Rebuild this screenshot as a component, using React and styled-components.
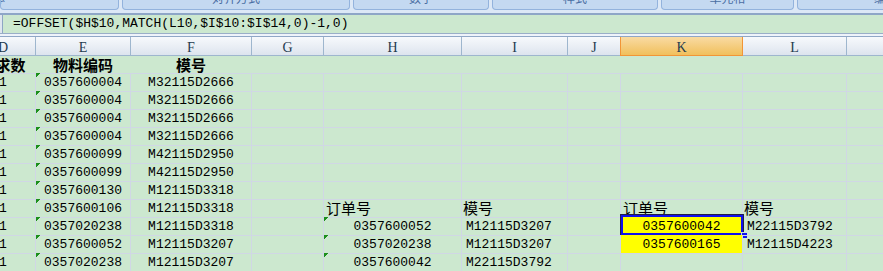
import styled, { createGlobalStyle } from "styled-components";

const GlobalStyle = createGlobalStyle`
  html, body {
    margin: 0;
    padding: 0;
    overflow: hidden;
    background: #cce8cf;
  }
`;

const COLS = "65px 95px 121px 72px 138px 106px 53px 122px 104px 100px";
const GRID = "#d0d7e5";
const MONO = `"Liberation Mono", "Noto Sans CJK SC", monospace`;
const CJK = `"Noto Sans CJK SC", "Noto Sans", sans-serif`;

const Window = styled.div`
  width: 883px;
  height: 271px;
  overflow: hidden;
  background: #cce8cf;
`;

const Ribbon = styled.div`
  display: flex;
  gap: 3px;
  height: 13px;
  background: #dce8f6;
  border-bottom: 2px solid #8ea6c7;
`;

const Group = styled.div`
  flex: 0 0 ${(p) => p.$w}px;
  height: 10px;
  box-sizing: border-box;
  overflow: hidden;
  background: #c4d9f1;
  border: 1px solid #93b3dd;
  border-top: none;
  border-radius: 0 0 4px 4px;
  font: 12px/12px ${CJK};
  color: #4a6ea3;
  text-align: ${(p) => (p.$left ? "left" : "center")};
`;

const GroupLabel = styled.div`
  margin-top: -8px;
  margin-left: ${(p) => p.$shift || 0}px;
  white-space: nowrap;
`;

const FormulaBar = styled.div`
  display: flex;
  height: 18px;
  background: #cce8cf;
  border-bottom: 1px solid #9aaec8;
`;

const FormulaStub = styled.div`
  width: 2px;
  background: #dfe6ef;
  border-right: 1px solid #8ea6c4;
`;

const FormulaText = styled.div`
  padding-left: 10px;
  font: 13px/18px ${MONO};
  color: #000;
  white-space: nowrap;
`;

const HeaderGap = styled.div`
  height: 2px;
  background: #eef3fa;
`;

const Sheet = styled.div`
  margin-left: -29px;
  width: 1000px;
`;

const HeaderRow = styled.div`
  display: grid;
  grid-template-columns: ${COLS};
  border-top: 1px solid #8fa7c6;
`;

const ColHead = styled.div`
  box-sizing: border-box;
  height: 19px;
  padding-top: 2px;
  text-align: center;
  font: 14px/17px "Liberation Serif", serif;
  color: #1f3b4f;
  background: ${(p) =>
    p.$active
      ? "linear-gradient(#f9dba3, #f1c05c)"
      : "linear-gradient(#f7f9fc, #dde4ee)"};
  border-right: 1px solid ${(p) => (p.$active ? "#f29536" : "#9eb6ce")};
  border-bottom: 1px solid ${(p) => (p.$active ? "#f29536" : "#9eb6ce")};
  box-shadow: ${(p) => (p.$active ? "-1px 0 0 #f29536" : "none")};
`;

const Row = styled.div`
  display: grid;
  grid-template-columns: ${COLS};
  height: ${(p) => p.$h}px;
`;

const Cell = styled.div`
  position: relative;
  box-sizing: border-box;
  border-bottom: 1px solid ${GRID};
  border-right: 1px solid ${(p) => (p.$noGrid ? "transparent" : GRID)};
  background: ${(p) =>
    p.$tri
      ? "linear-gradient(135deg, #1b8f1b 3.5px, transparent 3.5px)"
      : p.$fill || "transparent"};
  background-color: ${(p) => p.$fill || "transparent"};
  text-align: ${(p) => p.$align || "left"};
  padding-left: ${(p) => p.$pad || 0}px;
  padding-top: 1px;
  font: ${(p) => (p.$bold ? 700 : 400)} ${(p) => (p.$cjk ? "15px" : "13px")} /
    ${(p) => (p.$cjk ? "16px" : "17px")} ${(p) => (p.$cjk ? CJK : MONO)};
  color: #000;
  white-space: nowrap;
`;

const Selection = styled.div`
  position: absolute;
  left: -1px;
  right: -2px;
  top: -3px;
  bottom: -1px;
  border: 1px solid #20204a;
  box-shadow: inset 0 0 0 2px #1010ee;
  pointer-events: none;
`;

const FillHandle = styled.div`
  position: absolute;
  right: -4px;
  bottom: -3px;
  width: 5px;
  height: 5px;
  background: #1010ee;
  border: 1px solid #cce8cf;
  border-right: none;
  border-bottom: none;
`;

const groups = [
  { w: 119, label: "字体", left: true, shift: -20 },
  { w: 228, label: "对齐方式" },
  { w: 136, label: "数字" },
  { w: 166, label: "样式" },
  { w: 133, label: "单元格" },
  { w: 130, label: "编辑", left: true, shift: 76 },
];

const letters = ["D", "E", "F", "G", "H", "I", "J", "K", "L", "M"];

const rows = [
  { e: "0357600004", f: "M32115D2666" },
  { e: "0357600004", f: "M32115D2666" },
  { e: "0357600004", f: "M32115D2666" },
  { e: "0357600004", f: "M32115D2666" },
  { e: "0357600099", f: "M42115D2950" },
  { e: "0357600099", f: "M42115D2950" },
  { e: "0357600130", f: "M12115D3318" },
  { e: "0357600106", f: "M12115D3318", h: "订单号", i: "模号", k: "订单号", l: "模号", label: true },
  { e: "0357020238", f: "M12115D3318", h: "0357600052", i: "M12115D3207", k: "0357600042", l: "M22115D3792", yellow: true, sel: true },
  { e: "0357600052", f: "M12115D3207", h: "0357020238", i: "M12115D3207", k: "0357600165", l: "M12115D4223", yellow: true },
  { e: "0357020238", f: "M12115D3207", h: "0357600042", i: "M22115D3792" },
  { e: "", f: "", h: "", tri: true },
];

function DataRow({ r }) {
  const hTri = r.tri || (r.h && !r.label);
  return (
    <Row $h={18}>
      <Cell $align="center">{r.e || r.tri ? "1" : ""}</Cell>
      <Cell $align="center" $tri>{r.e}</Cell>
      <Cell $align="center">{r.f}</Cell>
      <Cell />
      {r.label ? (
        <Cell $cjk $pad={2}>{r.h}</Cell>
      ) : (
        <Cell $align="center" $tri={hTri}>{r.h}</Cell>
      )}
      {r.label ? <Cell $cjk $pad={1}>{r.i}</Cell> : <Cell $pad={4}>{r.i}</Cell>}
      <Cell />
      {r.label ? (
        <Cell $cjk $pad={2}>{r.k}</Cell>
      ) : (
        <Cell $align="center" $fill={r.yellow ? "#ffff00" : undefined}>
          {r.k}
          {r.sel && (
            <Selection>
              <FillHandle />
            </Selection>
          )}
        </Cell>
      )}
      {r.label ? <Cell $cjk $pad={1}>{r.l}</Cell> : <Cell $pad={4}>{r.l}</Cell>}
      <Cell />
    </Row>
  );
}

export default function App() {
  return (
    <Window>
      <GlobalStyle />
      <Ribbon>
        {groups.map((g) => (
          <Group key={g.label} $w={g.w} $left={g.left}>
            <GroupLabel $shift={g.shift}>{g.label}</GroupLabel>
          </Group>
        ))}
      </Ribbon>
      <FormulaBar>
        <FormulaStub />
        <FormulaText>=OFFSET($H$10,MATCH(L10,$I$10:$I$14,0)-1,0)</FormulaText>
      </FormulaBar>
      <HeaderGap />
      <Sheet>
        <HeaderRow>
          {letters.map((c) => (
            <ColHead key={c} $active={c === "K"}>
              {c}
            </ColHead>
          ))}
        </HeaderRow>
        <Row $h={17}>
          <Cell $noGrid $cjk $bold $align="center">需求数</Cell>
          <Cell $noGrid $cjk $bold $align="center">物料编码</Cell>
          <Cell $noGrid $cjk $bold $align="center">模号</Cell>
          <Cell $noGrid />
          <Cell $noGrid />
          <Cell $noGrid />
          <Cell $noGrid />
          <Cell $noGrid />
          <Cell $noGrid />
          <Cell $noGrid />
        </Row>
        {rows.map((r, idx) => (
          <DataRow key={idx} r={r} />
        ))}
      </Sheet>
    </Window>
  );
}
